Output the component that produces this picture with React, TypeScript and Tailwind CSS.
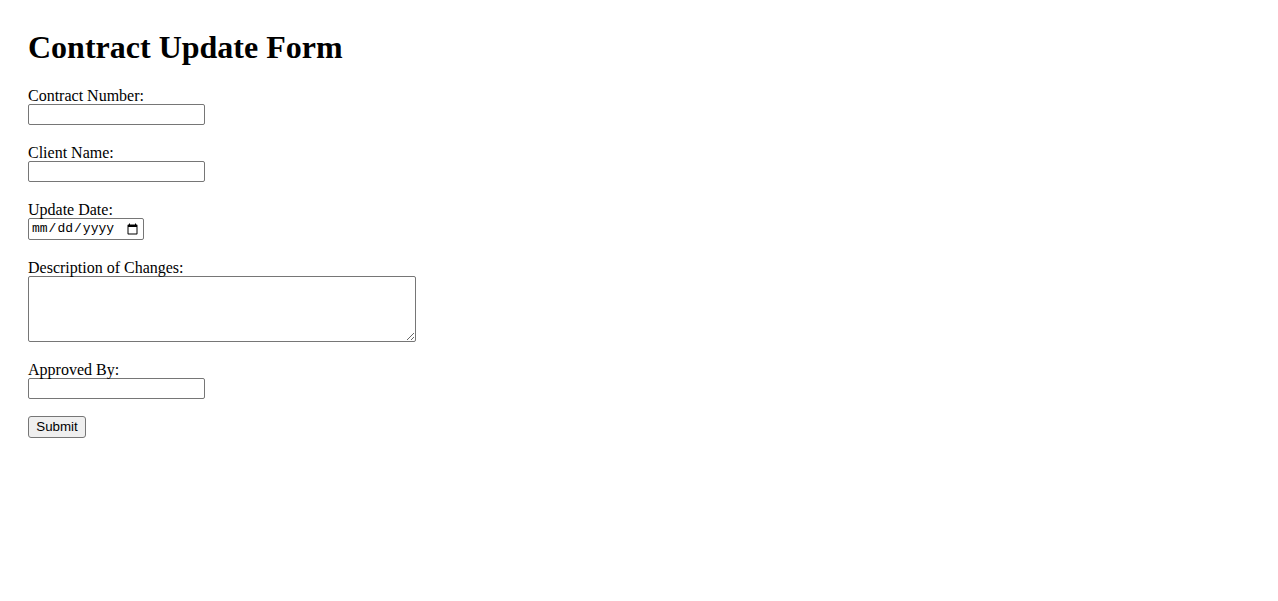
import { useState } from 'react';

const inputCls =
  "block w-[177px] h-[21px] border border-[#767676] rounded-[2px] bg-white px-[2px] py-[1px] text-[13.33px] font-['Liberation_Sans',Arial,sans-serif] text-black";

function Field({ label, children }: { label: string; children: React.ReactNode }) {
  return (
    <div className="mb-[17px]">
      <label className="block h-[19px] leading-[21px]">{label}</label>
      {children}
    </div>
  );
}

export default function App() {
  const [form, setForm] = useState({ number: '', client: '', date: '', description: '', approvedBy: '' });
  const set = (k: keyof typeof form) => (e: React.ChangeEvent<HTMLInputElement | HTMLTextAreaElement>) =>
    setForm({ ...form, [k]: e.target.value });

  return (
    <div className="min-h-screen bg-white px-[28px] pt-[29px] font-['Liberation_Serif','Times_New_Roman',serif] text-[16px] text-black">
      <h1 className="mb-[19px] text-[32px] font-bold leading-[37px]">Contract Update Form</h1>
      <form onSubmit={(e) => e.preventDefault()}>
        <Field label="Contract Number:">
          <input type="text" value={form.number} onChange={set('number')} className={inputCls} />
        </Field>
        <Field label="Client Name:">
          <input type="text" value={form.client} onChange={set('client')} className={inputCls} />
        </Field>
        <Field label="Update Date:">
          <input
            type="date"
            value={form.date}
            onChange={set('date')}
            className="block w-[116px] h-[22px] border border-[#767676] rounded-[2px] bg-white px-[2px] py-[1px] text-[13px] font-['Liberation_Mono',monospace] text-black"
          />
        </Field>
        <Field label="Description of Changes:">
          <textarea
            value={form.description}
            onChange={set('description')}
            className="block w-[388px] h-[66px] border border-[#767676] rounded-[2px] bg-white px-[2px] py-[2px] text-[13px] font-['Liberation_Mono',monospace] text-black"
          />
        </Field>
        <Field label="Approved By:">
          <input type="text" value={form.approvedBy} onChange={set('approvedBy')} className={inputCls} />
        </Field>
        <button
          type="submit"
          className="mt-[1px] block w-[58px] h-[22px] border border-[#767676] rounded-[3px] bg-[#efefef] px-[6px] text-[13.33px] font-['Liberation_Sans',Arial,sans-serif] text-black"
        >
          Submit
        </button>
      </form>
    </div>
  );
}
